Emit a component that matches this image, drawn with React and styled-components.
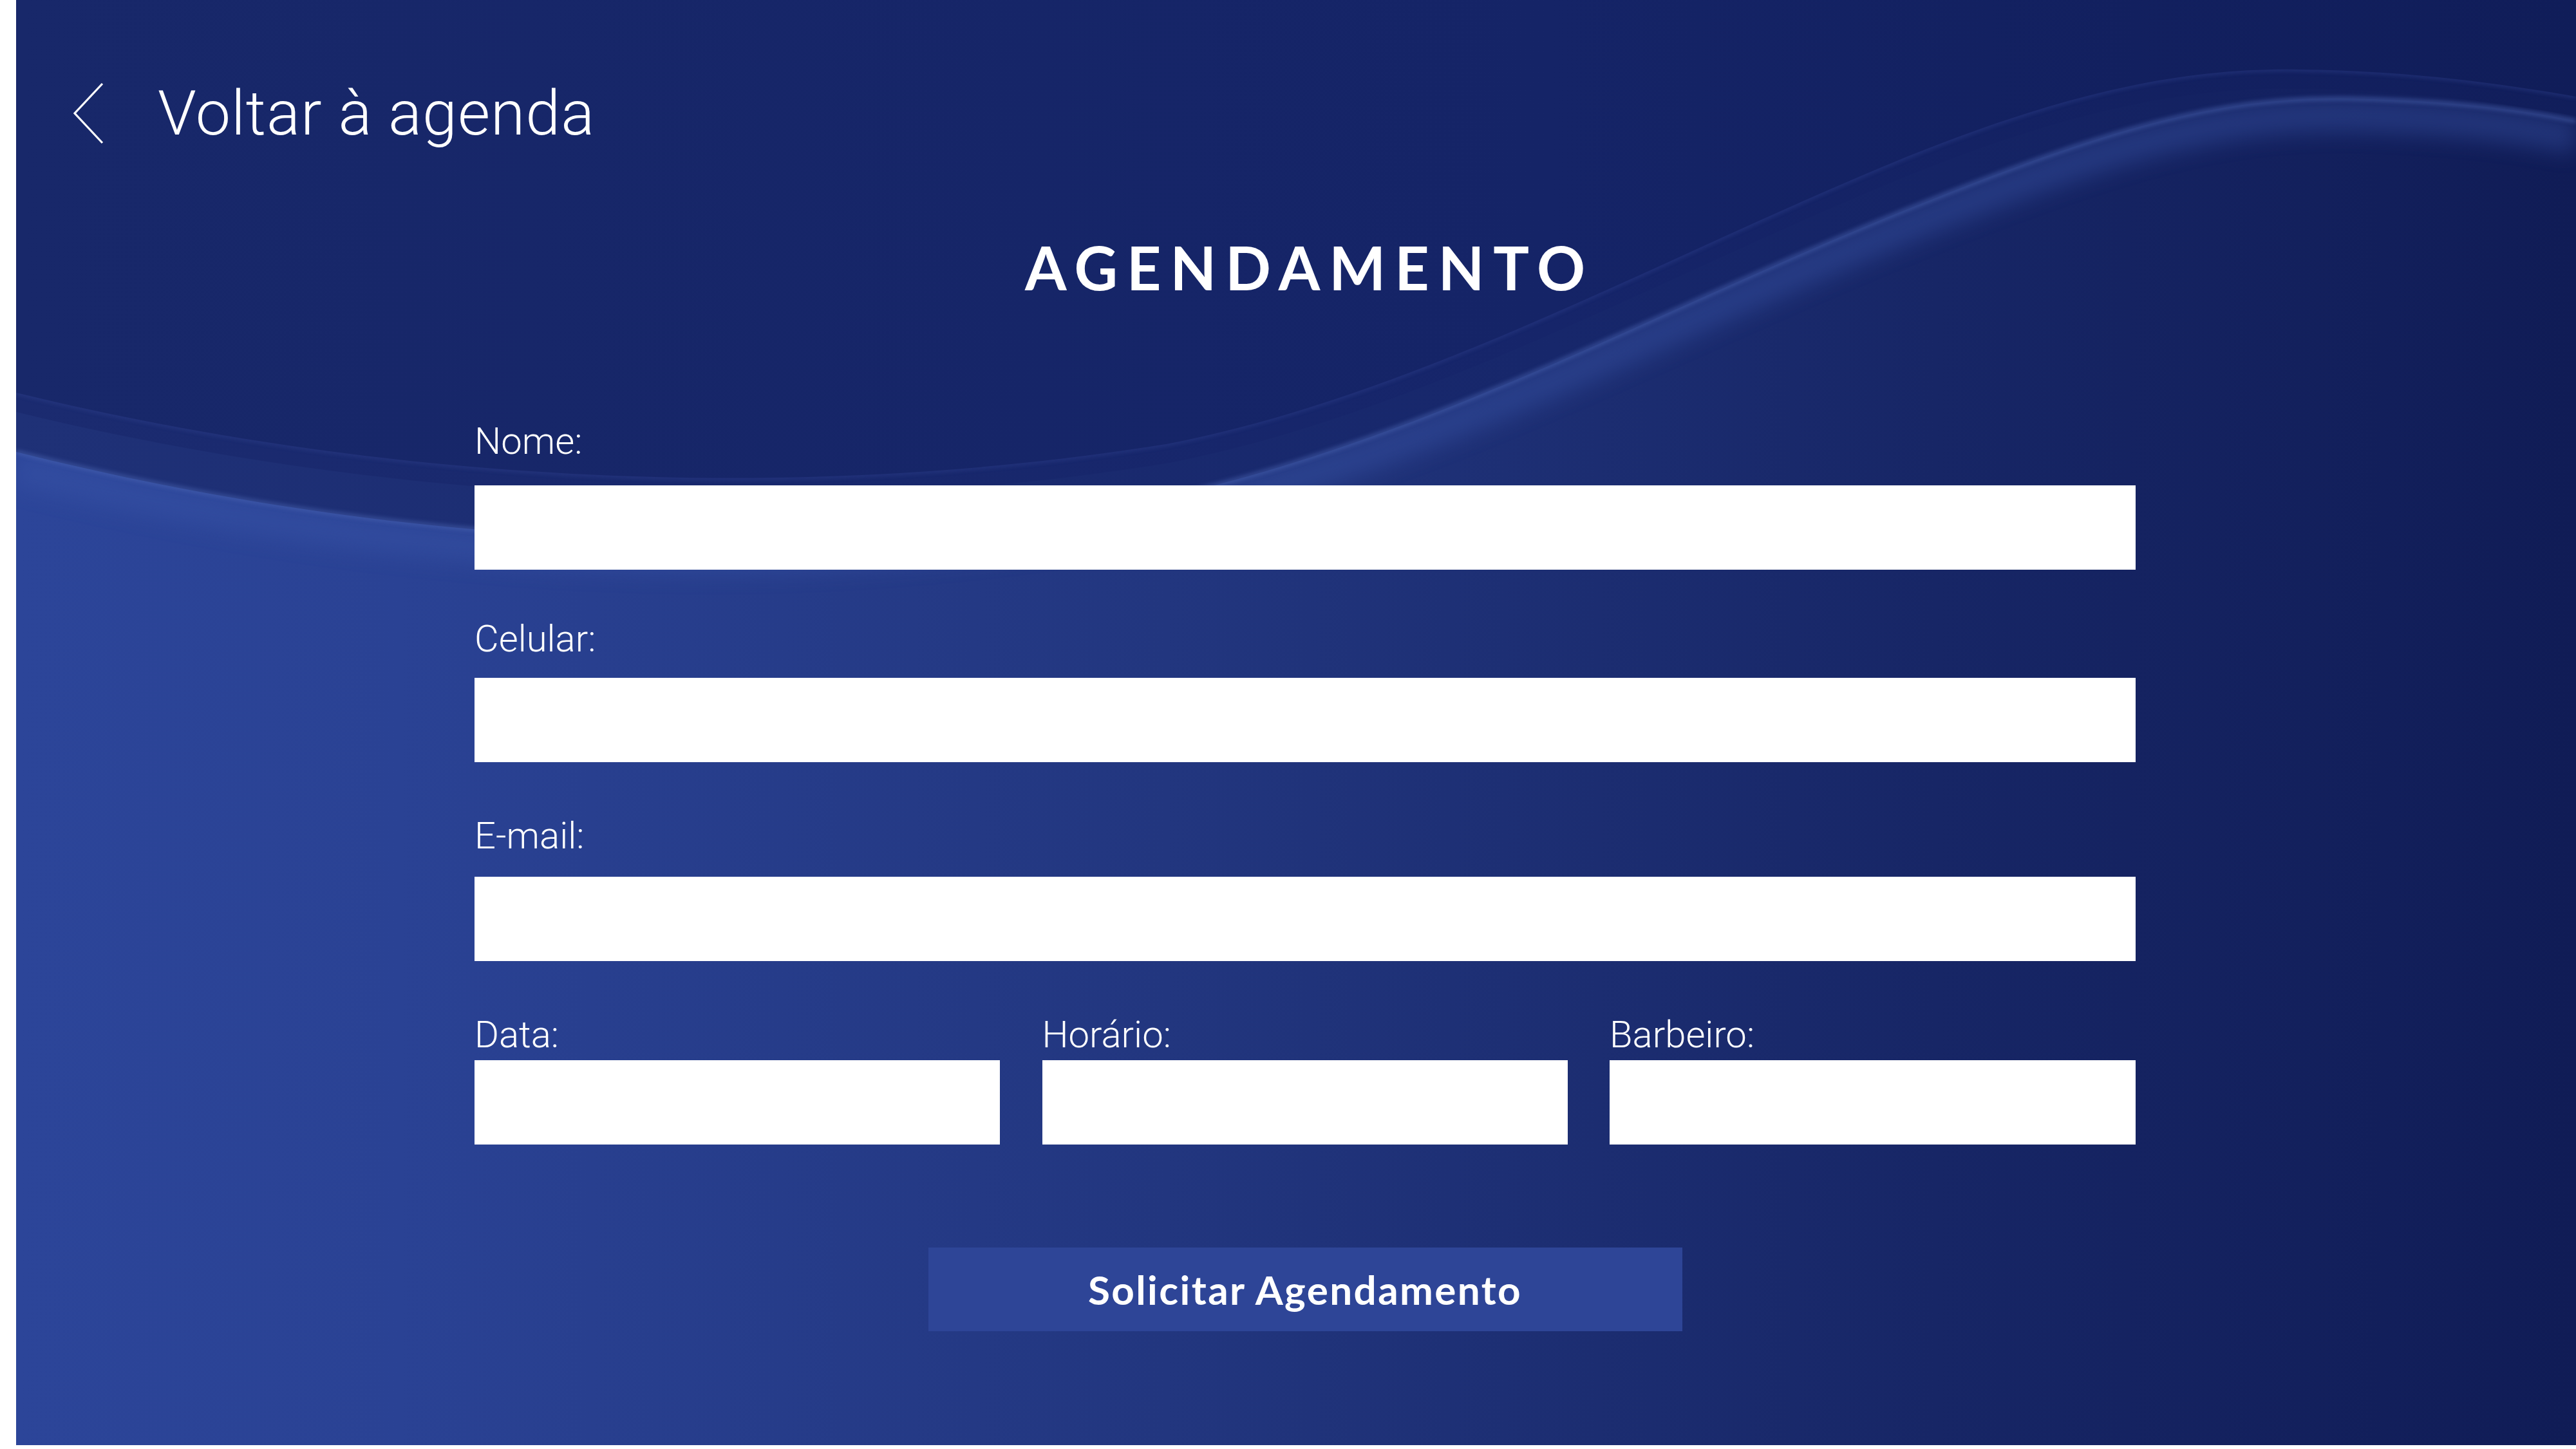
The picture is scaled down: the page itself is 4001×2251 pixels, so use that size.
import React from 'react'
import styled, { createGlobalStyle } from 'styled-components'

const GlobalStyle = createGlobalStyle`
    html, body {
        margin: 0;
        padding: 0;
        background: #ffffff;
    }
    body {
        width: 4001px;
        height: 2251px;
        overflow: hidden;
    }
`

// wave edges drawn across the panel (panel coords 3976 x 2245)
const CURVE_A = 'M0 610 C 450 720, 1100 800, 1786 690 C 2150 620, 2500 430, 2850 280 C 3150 150, 3350 105, 3545 108 C 3720 110, 3860 130, 3976 150'
const CURVE_B = 'M0 702 C 450 815, 1100 905, 1786 772 C 2200 680, 2550 480, 2950 320 C 3250 200, 3420 150, 3620 153 C 3780 156, 3890 170, 3976 188'

const above = (curve) => `M0 -40 L0 ${curve.split(' ')[1]} ${curve.slice(curve.indexOf('C'))} L3976 -40 Z`

function Waves() {
    return (
        <Backdrop viewBox="0 0 3976 2245" preserveAspectRatio="none">
            <defs>
                <linearGradient id="base" gradientUnits="userSpaceOnUse" x1="0" y1="0" x2="3976" y2="0">
                    <stop offset="0" stopColor="#2c4599" />
                    <stop offset="0.15" stopColor="#2a4294" />
                    <stop offset="0.45" stopColor="#22367f" />
                    <stop offset="0.75" stopColor="#172666" />
                    <stop offset="1" stopColor="#101c56" />
                </linearGradient>
                <linearGradient id="bandB" gradientUnits="userSpaceOnUse" x1="0" y1="0" x2="3976" y2="0">
                    <stop offset="0" stopColor="#1f3177" />
                    <stop offset="0.6" stopColor="#17276b" />
                    <stop offset="1" stopColor="#121f5c" />
                </linearGradient>
                <linearGradient id="bandA2" gradientUnits="userSpaceOnUse" x1="0" y1="0" x2="3976" y2="0">
                    <stop offset="0" stopColor="#1b2b70" />
                    <stop offset="0.6" stopColor="#16256a" />
                    <stop offset="1" stopColor="#111e5b" />
                </linearGradient>
                <linearGradient id="bandA" gradientUnits="userSpaceOnUse" x1="0" y1="0" x2="3976" y2="0">
                    <stop offset="0" stopColor="#18286a" />
                    <stop offset="0.6" stopColor="#152467" />
                    <stop offset="1" stopColor="#101d59" />
                </linearGradient>
                <filter id="soft" x="-10%" y="-10%" width="120%" height="120%">
                    <feGaussianBlur stdDeviation="16" />
                </filter>
                <filter id="edge" x="-10%" y="-10%" width="120%" height="120%">
                    <feGaussianBlur stdDeviation="3" />
                </filter>
            </defs>
            <rect width="3976" height="2245" fill="url(#base)" />
            <path d={CURVE_B} transform="translate(0 26)" fill="none" stroke="#3b56aa" strokeWidth="52" opacity="0.4" filter="url(#soft)" />
            <path d={above(CURVE_B)} fill="url(#bandB)" />
            <path d={CURVE_B} fill="none" stroke="#4d67b5" strokeWidth="6" opacity="0.55" filter="url(#edge)" />
            <path d={above(CURVE_A)} transform="translate(0 30)" fill="url(#bandA2)" />
            <path d={CURVE_A} fill="none" stroke="#2d418c" strokeWidth="5" opacity="0.6" filter="url(#edge)" />
            <path d={above(CURVE_A)} fill="url(#bandA)" />
        </Backdrop>
    )
}

function App() {
    return (
        <>
            <GlobalStyle />
            <Page>
                <Panel>
                    <Waves />
                    <Content>
                        <BackLink href="#">
                            <svg width="48" height="96" viewBox="0 0 48 96">
                                <polyline points="46,2 3,48 46,94" fill="none" stroke="#ffffff" strokeWidth="3.2" strokeLinejoin="miter" />
                            </svg>
                            Voltar à agenda
                        </BackLink>

                        <Form onSubmit={(e) => e.preventDefault()}>
                            <Title>AGENDAMENTO</Title>

                            <Field $top={194}>
                                <Caption $gap={40}>Nome:</Caption>
                                <Input type="text" />
                            </Field>
                            <Field $top={78}>
                                <Caption $gap={32}>Celular:</Caption>
                                <Input type="tel" />
                            </Field>
                            <Field $top={85}>
                                <Caption $gap={35}>E-mail:</Caption>
                                <Input type="email" />
                            </Field>

                            <Row>
                                <Field $top={0}>
                                    <Caption $gap={11}>Data:</Caption>
                                    <Input type="text" />
                                </Field>
                                <Field $top={0}>
                                    <Caption $gap={11}>Horário:</Caption>
                                    <Input type="text" />
                                </Field>
                                <Field $top={0}>
                                    <Caption $gap={11}>Barbeiro:</Caption>
                                    <Input type="text" />
                                </Field>
                            </Row>

                            <Submit type="submit">Solicitar Agendamento</Submit>
                        </Form>
                    </Content>
                </Panel>
            </Page>
        </>
    )
}

const Page = styled.div`
    width: 4001px;
    height: 2251px;
    box-sizing: border-box;
    padding-left: 25px;
    background: #ffffff;
`

const Panel = styled.main`
    position: relative;
    width: 3976px;
    height: 2245px;
    overflow: hidden;
    background: #1d2f78;
`

const Backdrop = styled.svg`
    position: absolute;
    inset: 0;
    width: 100%;
    height: 100%;
    display: block;
`

const Content = styled.div`
    position: relative;
    display: flex;
    flex-direction: column;
    align-items: flex-start;
`

const BackLink = styled.a`
    display: flex;
    align-items: center;
    gap: 84px;
    height: 96px;
    margin: 128px 0 0 88px;
    color: #ffffff;
    text-decoration: none;
    font-family: Roboto, "Liberation Sans", sans-serif;
    font-weight: 300;
    font-size: 97px;
    letter-spacing: 1px;
    line-height: 1;
    svg {
        display: block;
        flex-shrink: 0;
    }
`

const Form = styled.form`
    display: flex;
    flex-direction: column;
    width: 2580px;
    margin: 0 0 0 712px;
`

const Title = styled.h1`
    margin: 145px 0 0;
    padding-left: 14px;
    text-align: center;
    color: #ffffff;
    font-family: Lato, "Liberation Sans", sans-serif;
    font-weight: 700;
    font-size: 93px;
    line-height: 1;
    letter-spacing: 14px;
`

const Field = styled.label`
    display: flex;
    flex-direction: column;
    margin-top: ${(p) => p.$top}px;
`

const Caption = styled.span`
    margin-bottom: ${(p) => p.$gap}px;
    color: #ffffff;
    font-family: Roboto, "Liberation Sans", sans-serif;
    font-weight: 300;
    font-size: 58px;
    line-height: 1;
`

const Input = styled.input`
    box-sizing: border-box;
    width: 100%;
    height: 131px;
    margin: 0;
    padding: 0 30px;
    border: 0;
    border-radius: 0;
    outline: none;
    background: #ffffff;
    font-family: Roboto, "Liberation Sans", sans-serif;
    font-size: 56px;
    color: #1b2a6c;
`

const Row = styled.div`
    display: grid;
    grid-template-columns: 816px 816px 817px;
    justify-content: space-between;
    margin-top: 85px;
`

const Submit = styled.button`
    align-self: center;
    width: 1171px;
    height: 130px;
    margin-top: 160px;
    padding: 0;
    border: 0;
    border-radius: 0;
    background: #2e4597;
    color: #ffffff;
    font-family: Lato, "Liberation Sans", sans-serif;
    font-weight: 700;
    font-size: 62px;
    letter-spacing: 2.4px;
    cursor: pointer;
`

export default App
